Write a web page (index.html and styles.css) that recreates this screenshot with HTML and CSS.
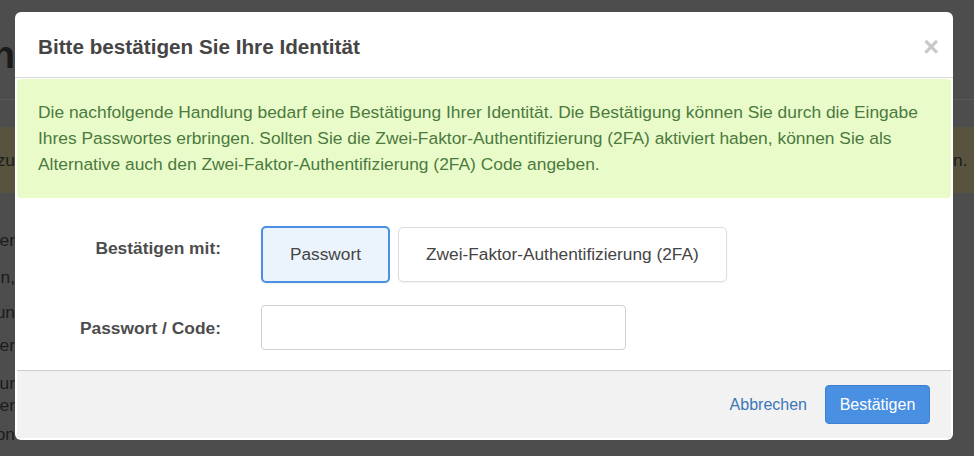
FILE: index.html
```html
<!DOCTYPE html>
<html lang="de">
<head>
<meta charset="utf-8">
<title>Bitte bestätigen Sie Ihre Identität</title>
<link rel="stylesheet" href="styles.css">
</head>
<body>
<div class="page">
  <div class="pg-heading"><span class="clip"><span>Sicherheitsoption</span></span></div>
  <div class="pg-rule"></div>
  <div class="pg-band">
    <span class="clip"><span>Bitte bestätigen Sie die Änderung zu</span></span>
    <span class="band-end">n.</span>
  </div>
  <div class="pg-line l1"><span class="clip"><span>Hier können Sie Ihre Daten ändern oder</span></span></div>
  <div class="pg-line l2"><span class="clip"><span>Zum Beispiel Benutzernamen,</span></span></div>
  <div class="pg-line l3"><span class="clip"><span>Zwei-Faktor-Authentifizierun</span></span></div>
  <div class="pg-line l4"><span class="clip"><span>Sitzungen verwalten oder</span></span></div>
  <div class="pg-line l5"><span class="clip"><span>Benachrichtigungen und Einstellungen nur</span></span></div>
  <div class="pg-line l6"><span class="clip"><span>Sicherheit Ihres Kontos über</span></span></div>
  <div class="pg-line l7"><span class="clip"><span>Verbindungen zu Diensten: Anmeldung mit Konton</span></span></div>
</div>

<div class="modal" role="dialog">
  <div class="modal-header">
    <h4 class="modal-title">Bitte bestätigen Sie Ihre Identität</h4>
    <span class="close">×</span>
  </div>
  <div class="alert">
    Die nachfolgende Handlung bedarf eine Bestätigung Ihrer Identität. Die Bestätigung können Sie durch die Eingabe
    Ihres Passwortes erbringen. Sollten Sie die Zwei-Faktor-Authentifizierung (2FA) aktiviert haben, können Sie als
    Alternative auch den Zwei-Faktor-Authentifizierung (2FA) Code angeben.
  </div>
  <div class="form">
    <div class="row row-method">
      <label class="label">Bestätigen mit:</label>
      <div class="choices">
        <button class="choice active">Passwort</button>
        <button class="choice">Zwei-Faktor-Authentifizierung (2FA)</button>
      </div>
    </div>
    <div class="row row-code">
      <label class="label">Passwort / Code:</label>
      <input class="input" type="password">
    </div>
  </div>
  <div class="modal-footer">
    <a class="cancel">Abbrechen</a>
    <button class="primary">Bestätigen</button>
  </div>
</div>
</body>
</html>
```

FILE: styles.css
```css
* { box-sizing: border-box; }
html, body { margin: 0; padding: 0; }
body {
  width: 974px;
  height: 456px;
  overflow: hidden;
  background: #4d4d4d;
  font-family: "Liberation Sans", Arial, sans-serif;
  color: #1c1c1c;
}

/* dimmed page behind the dialog */
.page { display: flex; flex-direction: column; }
.clip {
  display: flex;
  justify-content: flex-end;
  width: 15px;
  overflow: hidden;
  white-space: nowrap;
}
.pg-heading {
  margin-top: 33px;
  font-size: 38px;
  line-height: 44px;
  font-weight: bold;
  color: #1a1a1a;
}
.pg-rule { margin-top: 22px; height: 1px; background: #585858; }
.pg-band {
  margin-top: 27px;
  height: 66px;
  background: #57533f;
  display: flex;
  align-items: center;
  justify-content: space-between;
  font-size: 17.4px;
  color: #1c1c1c;
}
.band-end { width: 21px; }
.pg-line { font-size: 17.4px; line-height: 22px; }
.l1 { margin-top: 36px; }
.l2 { margin-top: 15px; }
.l3 { margin-top: 13px; }
.l4 { margin-top: 11px; }
.l5 { margin-top: 16px; }
.l6 { margin-top: 0; }
.l7 { margin-top: 7px; }

/* dialog */
.modal {
  position: fixed;
  top: 12px;
  left: 15px;
  width: 938px;
  background: #fff;
  border-radius: 6px;
  padding: 0 2px 2px;
  color: #444;
}
.modal-header {
  height: 66px;
  border-bottom: 1px solid #d9d9d9;
  margin: 0 -2px;
  padding: 0 14px 0 23px;
  display: flex;
  align-items: center;
  justify-content: space-between;
}
.modal-title {
  margin: 0;
  font-size: 20.7px;
  font-weight: bold;
  color: #454545;
  padding-top: 4px;
}
.close {
  font-size: 27px;
  font-weight: bold;
  color: #c8c8c8;
  line-height: 1;
  padding-top: 6px;
}
.alert {
  margin-top: 1px;
  background: #eafbca;
  color: #4a7a3e;
  border-radius: 4px;
  padding: 20px 21px 21px;
  font-size: 17.4px;
  line-height: 26px;
}
.form {
  padding: 28px 0 20px;
  display: flex;
  flex-direction: column;
  gap: 22px;
}
.row { display: flex; align-items: flex-start; }
.label {
  width: 204px;
  text-align: right;
  font-size: 17.4px;
  line-height: 20px;
  font-weight: bold;
  color: #4d4d4d;
}
.row-method .label { padding-top: 12px; }
.row-code { align-items: center; }
.choices {
  margin-left: 40px;
  display: flex;
  gap: 8px;
  align-items: center;
}
.choice {
  font-family: inherit;
  font-size: 17.3px;
  color: #444;
  background: #fff;
  border: 1px solid #dcdcdc;
  border-radius: 5px;
  height: 55px;
  padding: 0 27px;
  box-shadow: 0 1px 2px rgba(0,0,0,0.06);
}
.choice.active {
  height: 57px;
  width: 129px;
  padding: 0;
  background: #ebf3fd;
  border: 2px solid #4a8fe2;
}
.input {
  margin-left: 40px;
  width: 365px;
  height: 45px;
  border: 1px solid #cfcfcf;
  border-radius: 4px;
  background: #fff;
}
.modal-footer {
  background: #f2f2f2;
  border-top: 1px solid #cccccc;
  padding: 14px 21px 14px;
  display: flex;
  justify-content: flex-end;
  align-items: center;
  gap: 18px;
}
.cancel {
  font-size: 16px;
  color: #3b77b8;
  cursor: pointer;
}
.primary {
  font-family: inherit;
  font-size: 16px;
  color: #fff;
  background: #4a90e2;
  border: 1px solid #3d80d1;
  border-radius: 4px;
  height: 39px;
  width: 105px;
  padding: 0;
}
```
